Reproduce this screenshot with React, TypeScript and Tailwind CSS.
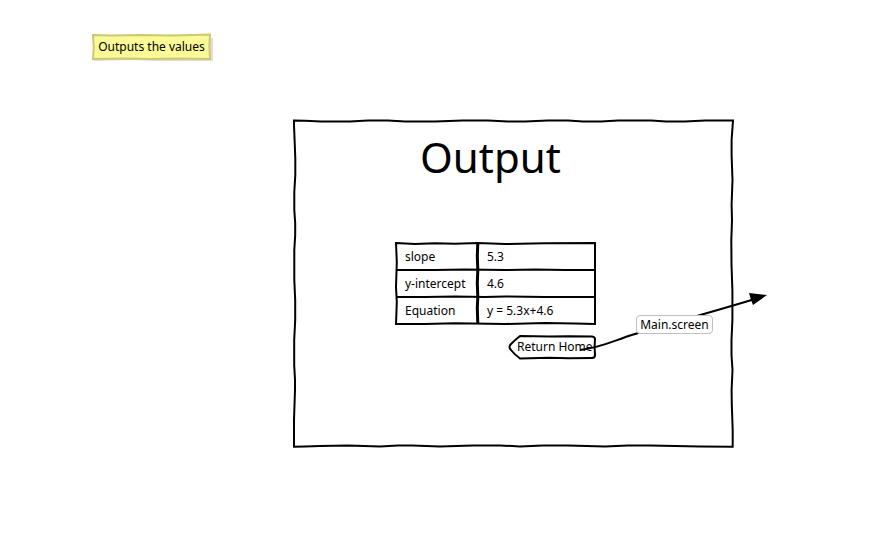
const rows = [
  { label: "slope", value: "5.3" },
  { label: "y-intercept", value: "4.6" },
  { label: "Equation", value: "y = 5.3x+4.6" },
];

function Note({ text }: { text: string }) {
  return (
    <aside className="relative isolate ml-[92px] flex h-[26px] w-[119px] items-center justify-center text-xs whitespace-nowrap">
      <svg
        className="absolute inset-0 -z-10 size-full overflow-visible"
        viewBox="0 0 119 26"
        preserveAspectRatio="none"
        fill="none"
        aria-hidden="true"
      >
        <path d="M2 4 H121 V27 H60 L40 26 L2 27 Z" fill="#e2dcdc" />
        <path
          d="M1 1 L20 1.6 L50 1 L80 1.6 L118 .5 L117.4 12 L118 25 L85 24.4 L60 25 L35 24.4 L1 25 L1.8 14 Z"
          fill="#fafa96"
          stroke="#cbc973"
          strokeWidth="2"
        />
      </svg>
      {text}
    </aside>
  );
}

function WindowFrame() {
  return (
    <svg
      className="pointer-events-none absolute inset-0 size-full overflow-visible"
      viewBox="0 0 441 328"
      preserveAspectRatio="none"
      fill="none"
      stroke="#000"
      strokeWidth="2"
      aria-hidden="true"
    >
      <path
        vectorEffect="non-scaling-stroke"
        d="M1 .5 L12 .7 L28 1.5 L57 1.5 L75 .6 L95 .6 L112 1.6 L142 1.6 L170 .6 L195 .6 L215 1.5 L232 1.5 L255 .6 L275 .6 L290 1.6 L308 1.6 L325 .6 L358 .6 L373 1.6 L392 1.6 L412 .6 L440 .5 L438.6 20 L438.6 35 L439.5 60 L438.6 85 L439 100 L438.3 120 L438.5 145 L439.4 170 L439.4 200 L438.5 220 L438.5 235 L439.5 250 L438.6 270 L438.8 285 L439.7 310 L439.7 326.8 L407 326.5 L357 325.4 L335 325.6 L312 326.4 L275 325.4 L250 325.4 L227 326.4 L207 325.5 L180 325.5 L147 326.4 L119 325.4 L105 325.6 L87 326.4 L55 325.4 L27 325.9 L12 326.5 L1 326.8 L1 300 L2 270 L2 260 L1.2 245 L1.2 220 L2.2 200 L2.2 180 L1.3 160 L1.3 130 L2.2 115 L2.2 103 L1.3 90 L1.3 72 L2.3 55 L2.3 38 L1 5 Z"
      />
    </svg>
  );
}

function TableLines() {
  return (
    <svg
      className="pointer-events-none absolute inset-0 size-full"
      viewBox="0 0 202 83"
      preserveAspectRatio="none"
      fill="none"
      stroke="#000"
      strokeWidth="2"
      aria-hidden="true"
    >
      <path d="M1 1 L20 2 L40 1.3 L60 1.8 L83 1 L110 2 L150 1.2 L200 1 L200 82 L180 81.6 L150 81 L110 82 L60 81.2 L30 82 L1 82 L1.8 60 L1 45 L1.8 20 Z" />
      <path d="M1 28 L40 28 L70 27.4 L110 28 L140 27.4 L170 28 L200 28 M1 55 L30 55 L60 54.4 L90 55 L110 54.4 L150 55 L200 55" />
      <path strokeWidth="3" d="M82.8 1 L82.3 14 L82.8 28 L82.3 41 L82.8 55 L82.3 66 L82.8 82" />
    </svg>
  );
}

function Connector({ target }: { target: string }) {
  return (
    <div className="pointer-events-none absolute top-[-43px] left-[71px] h-[62px] w-[190px]">
      <svg
        className="absolute inset-0 size-full"
        viewBox="0 0 190 62"
        fill="none"
        aria-hidden="true"
      >
        <path
          d="M0 58 C24 55 32 49 55 42 C95 30 125 22 175 7"
          stroke="#000"
          strokeWidth="2"
        />
        <path d="M169 1 L187 3 L173 13 L171 8 Z" fill="#000" />
      </svg>
      <span className="absolute top-[23px] left-[56px] flex h-[19px] w-[77px] items-center justify-center rounded border border-[#bfbfbf] bg-white text-xs">
        {target}
      </span>
    </div>
  );
}

function ReturnButton() {
  return (
    <div className="relative ml-auto h-[25px] w-[88px]">
      <button
        type="button"
        className="relative flex size-full items-center pb-[2px] pl-2 text-xs whitespace-nowrap"
      >
        <svg
          className="absolute inset-0 size-full overflow-visible"
          viewBox="0 0 88 25"
          fill="none"
          stroke="#000"
          strokeWidth="2"
          strokeLinejoin="round"
          aria-hidden="true"
        >
          <path d="M11 1 L40 1.5 L60 1.2 L83 1.5 Q86 2 86 4 L85.6 12 L86 20 Q86 23 83 23 L60 23.2 L40 22.8 L11 23.5 Q6 20 2 15 Q-1 12 2 9 Q6 5 11 1 Z" />
        </svg>
        Return Home
      </button>
      <Connector target="Main.screen" />
    </div>
  );
}

export default function App() {
  return (
    <main className="min-h-screen overflow-hidden bg-white pt-[34px] pb-8 font-['Noto_Sans','Open_Sans',sans-serif] text-black">
      <Note text="Outputs the values" />
      <section className="relative mt-[60px] mr-[142px] ml-[293px] pb-[88px]">
        <WindowFrame />
        <h1 className="pt-[7px] pl-[127px] text-[42px] leading-[60px]">Output</h1>
        <div className="mt-[55px] ml-[102px] w-[202px]">
          <div className="relative pt-px pb-px">
            <table className="w-full table-fixed border-collapse text-left text-xs">
              <tbody>
                {rows.map((row) => (
                  <tr key={row.label} className="h-[27px]">
                    <th scope="row" className="w-[83px] pl-[10px] font-normal whitespace-nowrap">
                      {row.label}
                    </th>
                    <td className="pl-[9px]">{row.value}</td>
                  </tr>
                ))}
              </tbody>
            </table>
            <TableLines />
          </div>
          <div className="mt-[10px] flex">
            <ReturnButton />
          </div>
        </div>
      </section>
    </main>
  );
}
